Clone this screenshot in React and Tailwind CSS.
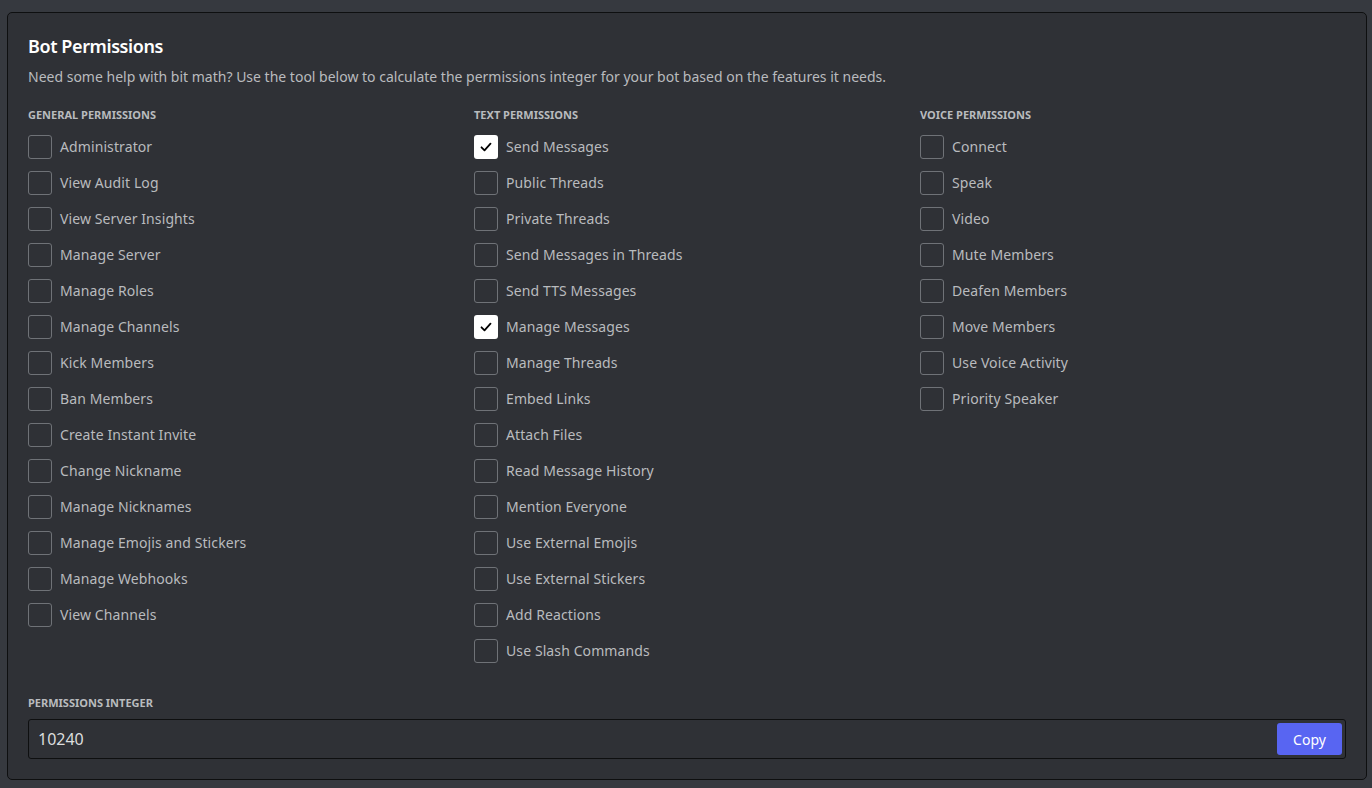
import React from "react";

const general = [
  "Administrator",
  "View Audit Log",
  "View Server Insights",
  "Manage Server",
  "Manage Roles",
  "Manage Channels",
  "Kick Members",
  "Ban Members",
  "Create Instant Invite",
  "Change Nickname",
  "Manage Nicknames",
  "Manage Emojis and Stickers",
  "Manage Webhooks",
  "View Channels",
];
const text = [
  "Send Messages",
  "Public Threads",
  "Private Threads",
  "Send Messages in Threads",
  "Send TTS Messages",
  "Manage Messages",
  "Manage Threads",
  "Embed Links",
  "Attach Files",
  "Read Message History",
  "Mention Everyone",
  "Use External Emojis",
  "Use External Stickers",
  "Add Reactions",
  "Use Slash Commands",
];
const voice = [
  "Connect",
  "Speak",
  "Video",
  "Mute Members",
  "Deafen Members",
  "Move Members",
  "Use Voice Activity",
  "Priority Speaker",
];
const checked = new Set(["Send Messages", "Manage Messages"]);

function Row({ label }) {
  const on = checked.has(label);
  return (
    <div className="flex items-center gap-2 h-6">
      {on ? (
        <div className="w-6 h-6 rounded-[3px] bg-white flex items-center justify-center">
          <svg width="16" height="16" viewBox="0 0 16 16" fill="none">
            <path d="M3.5 8.3l3 3 6-6.6" stroke="#000" strokeWidth="1.8" strokeLinecap="round" strokeLinejoin="round" />
          </svg>
        </div>
      ) : (
        <div className="w-6 h-6 rounded-[3px] border border-[#6f7277]" />
      )}
      <span className="text-[14px] leading-5 text-[#b9bbbe] tracking-[0.1px]">{label}</span>
    </div>
  );
}

function Column({ title, items }) {
  return (
    <div className="flex flex-col">
      <div className="text-[11px] leading-4 font-bold uppercase text-[#b9bbbe] mb-3">{title}</div>
      <div className="flex flex-col gap-3">
        {items.map((i) => (
          <Row key={i} label={i} />
        ))}
      </div>
    </div>
  );
}

export default function App() {
  return (
    <div
      className="w-[1372px] h-[788px] bg-[#36393f] pt-3 pl-[7px] pr-[5px]"
      style={{ fontFamily: '"Noto Sans", "Open Sans", sans-serif' }}
    >
      <div className="h-[768px] bg-[#2f3136] border border-[#0e0f10] rounded-[5px] px-5 pt-[21px] pb-5 flex flex-col">
        <h1 className="text-[18px] leading-6 font-semibold text-white tracking-[-0.4px]">Bot Permissions</h1>
        <p className="mt-[9px] text-[14px] leading-5 text-[#b9bbbe]">
          Need some help with bit math? Use the tool below to calculate the permissions integer for your bot based on the features it needs.
        </p>
        <div className="mt-[20px] grid grid-cols-3 gap-5">
          <Column title="General Permissions" items={general} />
          <Column title="Text Permissions" items={text} />
          <Column title="Voice Permissions" items={voice} />
        </div>
        <div className="mt-auto">
          <div className="text-[11px] leading-4 font-bold uppercase text-[#b9bbbe] mb-2">Permissions Integer</div>
          <div className="h-10 border border-[#0e0f10] rounded-[3px] flex items-center justify-between pl-[9px] pr-[3px]">
            <span className="text-[16px] text-[#dcddde]">10240</span>
            <button className="h-8 w-[65px] bg-[#5865f2] rounded-[3px] text-white text-[14px]">Copy</button>
          </div>
        </div>
      </div>
    </div>
  );
}
